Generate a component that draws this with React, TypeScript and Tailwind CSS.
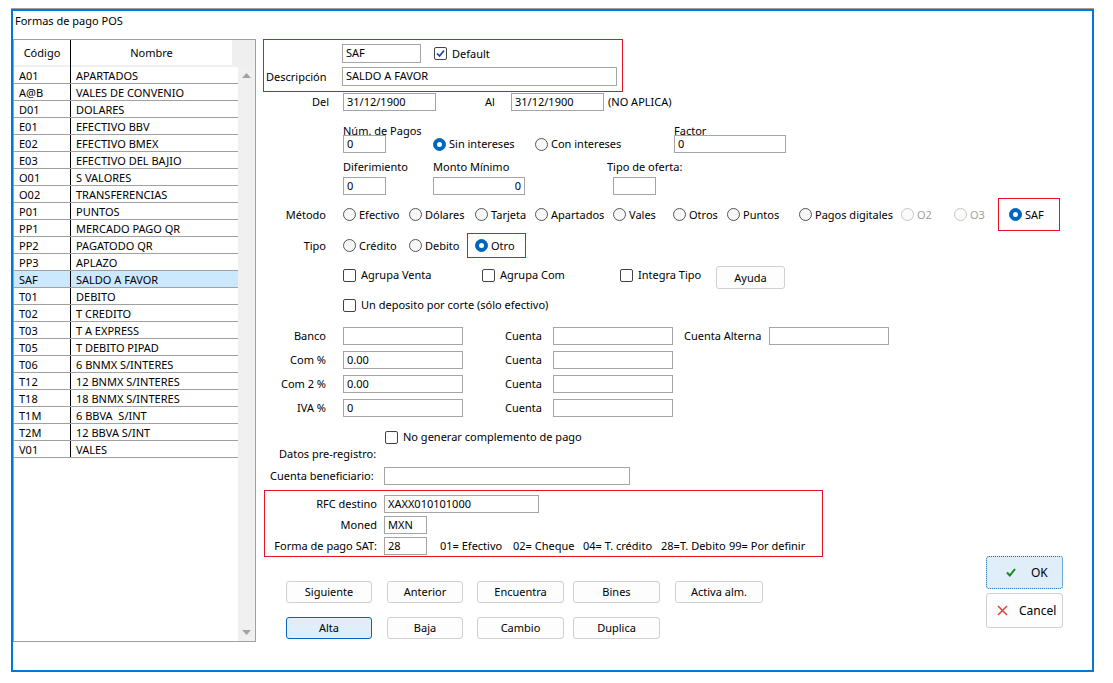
import React from 'react';

const rows: [string, string][] = [
  ['A01', 'APARTADOS'],
  ['A@B', 'VALES DE CONVENIO'],
  ['D01', 'DOLARES'],
  ['E01', 'EFECTIVO BBV'],
  ['E02', 'EFECTIVO BMEX'],
  ['E03', 'EFECTIVO DEL BAJIO'],
  ['O01', 'S VALORES'],
  ['O02', 'TRANSFERENCIAS'],
  ['P01', 'PUNTOS'],
  ['PP1', 'MERCADO PAGO QR'],
  ['PP2', 'PAGATODO QR'],
  ['PP3', 'APLAZO'],
  ['SAF', 'SALDO A FAVOR'],
  ['T01', 'DEBITO'],
  ['T02', 'T CREDITO'],
  ['T03', 'T A EXPRESS'],
  ['T05', 'T DEBITO PIPAD'],
  ['T06', '6 BNMX S/INTERES'],
  ['T12', '12 BNMX S/INTERES'],
  ['T18', '18 BNMX S/INTERES'],
  ['T1M', '6 BBVA  S/INT'],
  ['T2M', '12 BBVA S/INT'],
  ['V01', 'VALES'],
];

const metodos: { label: string; w: string; disabled?: boolean }[] = [
  { label: 'Efectivo', w: 'w-[66px]' },
  { label: 'Dólares', w: 'w-[66px]' },
  { label: 'Tarjeta', w: 'w-[60px]' },
  { label: 'Apartados', w: 'w-[78px]' },
  { label: 'Vales', w: 'w-[60px]' },
  { label: 'Otros', w: 'w-[54px]' },
  { label: 'Puntos', w: 'w-[72px]' },
  { label: 'Pagos digitales', w: 'w-[102px]' },
  { label: 'O2', w: 'w-[53px]', disabled: true },
  { label: 'O3', w: 'w-[44px]', disabled: true },
];

const Input = ({ w, h = 'h-[18px]', value = '', right = false }: { w: string; h?: string; value?: string; right?: boolean }) => (
  <div className={`${w} ${h} shrink-0 border border-[#a5a5a5] bg-white px-[3px] leading-[16px] whitespace-pre ${right ? 'text-right' : ''}`}>
    {value}
  </div>
);

const Radio = ({ checked = false, disabled = false }: { checked?: boolean; disabled?: boolean }) => (
  <span
    className={`w-[13px] h-[13px] shrink-0 rounded-full border flex items-center justify-center ${
      checked ? 'bg-[#0067c0] border-[#0067c0]' : disabled ? 'border-[#c6c6c6] bg-[#fbfbfb]' : 'border-[#555555] bg-[#f7f7f7]'
    }`}
  >
    {checked && <span className="w-[5px] h-[5px] rounded-full bg-white" />}
  </span>
);

const RadioOpt = ({ label, w, checked, disabled }: { label: string; w: string; checked?: boolean; disabled?: boolean }) => (
  <div className={`${w} shrink-0 flex items-center gap-[3px]`}>
    <Radio checked={checked} disabled={disabled} />
    <span className={disabled ? 'text-[#a0a0a0]' : ''}>{label}</span>
  </div>
);

const Check = ({ checked = false }: { checked?: boolean }) => (
  <span className="w-[13px] h-[13px] shrink-0 rounded-[2px] border border-[#444444] bg-white flex items-center justify-center">
    {checked && (
      <svg width="11" height="11" viewBox="0 0 11 11">
        <path d="M2 5.5 L4.5 8 L9 2.5" fill="none" stroke="#1a3fd6" strokeWidth="1.7" />
      </svg>
    )}
  </span>
);

const CheckOpt = ({ label, w, checked }: { label: string; w: string; checked?: boolean }) => (
  <div className={`${w} shrink-0 flex items-center gap-[5px]`}>
    <Check checked={checked} />
    <span>{label}</span>
  </div>
);

const Btn = ({ label, w, ml, active = false }: { label: string; w: string; ml: string; active?: boolean }) => (
  <div
    className={`${w} ${ml} h-[22px] shrink-0 rounded-[3px] border flex items-center justify-center ${
      active ? 'bg-[#e0eef9] border-[#0067c0]' : 'bg-[#fdfdfd] border-[#d0d0d0]'
    }`}
  >
    {label}
  </div>
);

const Label = ({ w, children, right = false }: { w: string; children: React.ReactNode; right?: boolean }) => (
  <div className={`${w} shrink-0 whitespace-nowrap ${right ? 'text-right' : ''}`}>{children}</div>
);

function ListPanel() {
  return (
    <div className="w-[243px] h-[603px] shrink-0 border border-[#a0a0a0] bg-white flex flex-col">
      <div className="h-[27px] shrink-0 flex bg-[#efefef]">
        <div className="w-[56px] h-[25px] bg-white flex items-center justify-center">Código</div>
        <div className="w-px h-[27px] bg-black" />
        <div className="w-[161px] h-[25px] bg-white flex items-center justify-center">Nombre</div>
      </div>
      <div className="flex flex-1">
        <div className="w-[224px]">
          {rows.map(([code, name]) => (
            <div
              key={code}
              className={`h-[17px] flex border-b border-[#a0a0a0] leading-[17px] ${code === 'SAF' ? 'bg-[#cce8ff]' : ''}`}
            >
              <div className="w-[57px] pl-[5px] border-r border-black">{code}</div>
              <div className="pl-[5px] whitespace-pre">{name}</div>
            </div>
          ))}
        </div>
        <div className="w-[17px] bg-[#f0f0f0] flex flex-col items-center justify-between pt-[6px] pb-[6px]">
          <svg width="9" height="5" viewBox="0 0 9 5">
            <path d="M0 5 L4.5 0 L9 5 Z" fill="#a3a3a3" />
          </svg>
          <svg width="9" height="5" viewBox="0 0 9 5">
            <path d="M0 0 L9 0 L4.5 5 Z" fill="#a3a3a3" />
          </svg>
        </div>
      </div>
    </div>
  );
}

function FormPanel() {
  return (
    <div className="flex-1 flex flex-col">
      {/* clave y descripción */}
      <div className="ml-[7px] w-[360px] h-[53px] border border-[#e81123] flex flex-col">
        <div className="flex items-center h-[19px] mt-[4px]">
          <Input w="ml-[78px] w-[79px]" h="h-[19px]" value="SAF" />
          <div className="ml-[13px]">
            <CheckOpt label="Default" w="w-[80px]" checked />
          </div>
        </div>
        <div className="flex items-center h-[19px] mt-[4px]">
          <Label w="ml-[2px] w-[76px]">Descripción</Label>
          <Input w="w-[275px]" h="h-[19px]" value="SALDO A FAVOR" />
        </div>
      </div>

      {/* fechas */}
      <div className="flex items-center h-[18px] mt-[1px]">
        <Label w="w-[73px]" right>Del</Label>
        <Input w="ml-[14px] w-[93px]" value="31/12/1900" />
        <Label w="ml-[49px] w-[26px]">Al</Label>
        <Input w="w-[93px]" value="31/12/1900" />
        <Label w="ml-[4px] w-[80px]">(NO APLICA)</Label>
      </div>

      {/* pagos */}
      <div className="flex items-center h-[14px] mt-[13px]">
        <Label w="ml-[87px] w-[331px]">Núm. de Pagos</Label>
        <Label w="w-[60px]">Factor</Label>
      </div>
      <div className="flex items-center h-[18px] mt-[-3px]">
        <Input w="ml-[87px] w-[43px]" value="0" />
        <div className="ml-[47px]">
          <RadioOpt label="Sin intereses" w="w-[102px]" checked />
        </div>
        <RadioOpt label="Con intereses" w="w-[139px]" />
        <Input w="w-[112px]" value="0" />
      </div>

      <div className="flex items-center h-[14px] mt-[7px]">
        <Label w="ml-[87px] w-[90px]">Diferimiento</Label>
        <Label w="w-[174px]">Monto Mínimo</Label>
        <Label w="w-[90px]">Tipo de oferta:</Label>
      </div>
      <div className="flex items-center h-[18px] mt-[3px]">
        <Input w="ml-[87px] w-[43px]" value="0" />
        <Input w="ml-[47px] w-[92px]" value="0" right />
        <Input w="ml-[88px] w-[43px]" />
      </div>

      {/* método */}
      <div className="flex items-center h-[33px] mt-[3px]">
        <Label w="w-[70px]" right>Método</Label>
        <div className="ml-[17px] flex items-center">
          {metodos.map((m) => (
            <RadioOpt key={m.label} label={m.label} w={m.w} disabled={m.disabled} />
          ))}
        </div>
        <div className="w-[62px] h-[33px] border border-[#e81123] flex items-center pl-[10px]">
          <RadioOpt label="SAF" w="w-[45px]" checked />
        </div>
      </div>

      {/* tipo */}
      <div className="flex items-center h-[25px] mt-[2px]">
        <Label w="w-[70px]" right>Tipo</Label>
        <div className="ml-[17px]">
          <RadioOpt label="Crédito" w="w-[66px]" />
        </div>
        <RadioOpt label="Debito" w="w-[58px]" />
        <div className="w-[59px] h-[25px] border border-[#e81123] flex items-center pl-[7px]">
          <RadioOpt label="Otro" w="w-[45px]" checked />
        </div>
      </div>

      {/* checks */}
      <div className="flex items-center h-[23px] mt-[8px]">
        <div className="ml-[87px] mb-[5px] flex items-center">
          <CheckOpt label="Agrupa Venta" w="w-[139px]" />
          <CheckOpt label="Agrupa Com" w="w-[138px]" />
          <CheckOpt label="Integra Tipo" w="w-[96px]" />
        </div>
        <div className="w-[69px] h-[23px] rounded-[3px] border border-[#d0d0d0] bg-[#fdfdfd] flex items-center justify-center">
          Ayuda
        </div>
      </div>
      <div className="flex items-center h-[14px] mt-[9px]">
        <div className="ml-[87px]">
          <CheckOpt label="Un deposito por corte (sólo efectivo)" w="w-[260px]" />
        </div>
      </div>

      {/* banco y cuentas */}
      <div className="flex items-center h-[18px] mt-[15px]">
        <Label w="w-[70px]" right>Banco</Label>
        <Input w="ml-[17px] w-[120px]" />
        <Label w="ml-[42px] w-[48px]">Cuenta</Label>
        <Input w="w-[120px]" />
        <Label w="ml-[11px] w-[85px]">Cuenta Alterna</Label>
        <Input w="w-[120px]" />
      </div>
      <div className="flex items-center h-[18px] mt-[6px]">
        <Label w="w-[70px]" right>Com %</Label>
        <Input w="ml-[17px] w-[120px]" value="0.00" />
        <Label w="ml-[42px] w-[48px]">Cuenta</Label>
        <Input w="w-[120px]" />
      </div>
      <div className="flex items-center h-[18px] mt-[6px]">
        <Label w="w-[70px]" right>Com 2 %</Label>
        <Input w="ml-[17px] w-[120px]" value="0.00" />
        <Label w="ml-[42px] w-[48px]">Cuenta</Label>
        <Input w="w-[120px]" />
      </div>
      <div className="flex items-center h-[18px] mt-[6px]">
        <Label w="w-[70px]" right>IVA %</Label>
        <Input w="ml-[17px] w-[120px]" value="0" />
        <Label w="ml-[42px] w-[48px]">Cuenta</Label>
        <Input w="w-[120px]" />
      </div>

      <div className="flex items-center h-[14px] mt-[13px]">
        <div className="ml-[129px]">
          <CheckOpt label="No generar complemento de pago" w="w-[240px]" />
        </div>
      </div>
      <div className="flex items-center h-[14px] mt-[3px]">
        <Label w="ml-[23px] w-[120px]">Datos pre-registro:</Label>
      </div>
      <div className="flex items-center h-[18px] mt-[6px]">
        <Label w="ml-[14px] w-[114px]">Cuenta beneficiario:</Label>
        <Input w="w-[246px]" />
      </div>

      {/* datos SAT */}
      <div className="ml-[8px] mt-[5px] w-[559px] h-[67px] border border-[#e81123] flex flex-col">
        <div className="flex items-center h-[18px] mt-[4px]">
          <Label w="w-[112px]" right>RFC destino</Label>
          <Input w="ml-[7px] w-[155px]" value="XAXX010101000" />
        </div>
        <div className="flex items-center h-[18px] mt-[3px]">
          <Label w="w-[112px]" right>Moned</Label>
          <Input w="ml-[7px] w-[43px]" value="MXN" />
        </div>
        <div className="flex items-center h-[18px] mt-[3px]">
          <Label w="w-[112px]" right>Forma de pago SAT:</Label>
          <Input w="ml-[7px] w-[43px]" value="28" />
          <Label w="ml-[13px] w-[73px]">01= Efectivo</Label>
          <Label w="w-[70px]">02= Cheque</Label>
          <Label w="w-[78px]">04= T. crédito</Label>
          <Label w="w-[68px]">28=T. Debito</Label>
          <Label w="w-[90px]">99= Por definir</Label>
        </div>
      </div>

      {/* botones */}
      <div className="flex">
        <div className="w-[730px] shrink-0 flex flex-col">
          <div className="flex mt-[24px]">
            <Btn label="Siguiente" w="w-[86px]" ml="ml-[30px]" />
            <Btn label="Anterior" w="w-[76px]" ml="ml-[15px]" />
            <Btn label="Encuentra" w="w-[87px]" ml="ml-[14px]" />
            <Btn label="Bines" w="w-[87px]" ml="ml-[9px]" />
            <Btn label="Activa alm." w="w-[88px]" ml="ml-[15px]" />
          </div>
          <div className="flex mt-[14px]">
            <Btn label="Alta" w="w-[86px]" ml="ml-[30px]" active />
            <Btn label="Baja" w="w-[76px]" ml="ml-[15px]" />
            <Btn label="Cambio" w="w-[87px]" ml="ml-[14px]" />
            <Btn label="Duplica" w="w-[87px]" ml="ml-[9px]" />
          </div>
        </div>
        <div className="flex flex-col mt-[-1px]">
          <div className="w-[77px] h-[33px] rounded-[3px] border border-dotted border-[#0067c0] bg-[#e0eef9] flex items-center pl-[19px]">
            <svg width="10" height="9" viewBox="0 0 10 9">
              <path d="M1 4.5 L3.8 7.5 L9 1" fill="none" stroke="#108a10" strokeWidth="2" />
            </svg>
            <span className="ml-[15px] text-[12px]">OK</span>
          </div>
          <div className="w-[77px] h-[35px] mt-[4px] rounded-[3px] border border-[#d0d0d0] bg-[#fdfdfd] flex items-center pl-[10px]">
            <svg width="11" height="11" viewBox="0 0 11 11">
              <path d="M1 1 L10 10 M10 1 L1 10" fill="none" stroke="#e0413a" strokeWidth="1.5" />
            </svg>
            <span className="ml-[11px] text-[12px]">Cancel</span>
          </div>
        </div>
      </div>
    </div>
  );
}

export default function App() {
  return (
    <div className="w-[1113px] h-[683px] bg-white text-black text-[11px] leading-[14px] font-['Noto_Sans',sans-serif] overflow-hidden">
      <div className="h-[8px]" />
      <div className="ml-[11px] w-[1083px] h-[664px] border-t border-[#a0a0a0]">
        <div className="h-[663px] border-2 border-[#0078d7] flex flex-col">
          <div className="h-[28px] shrink-0 pl-[2px] pt-[2px] leading-[16px]">Formas de pago POS</div>
          <div className="flex">
            <ListPanel />
            <FormPanel />
          </div>
        </div>
      </div>
    </div>
  );
}
